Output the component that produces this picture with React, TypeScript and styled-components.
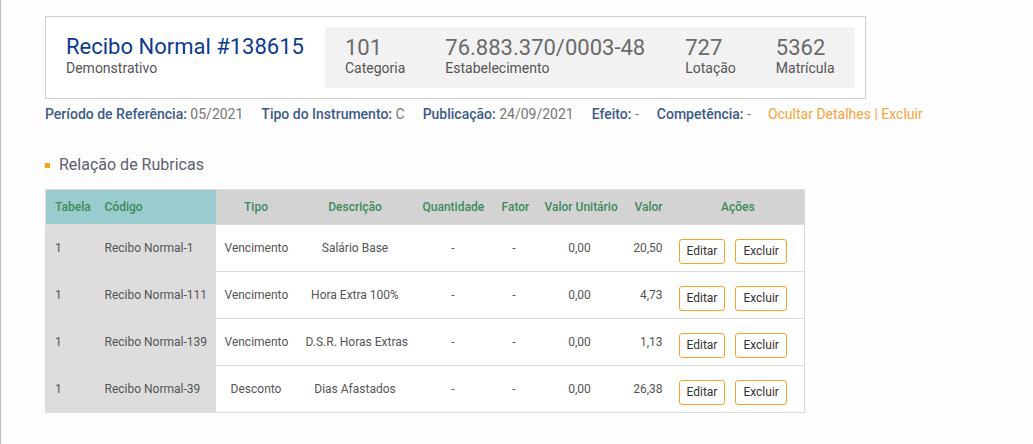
import React from "react";
import styled, { createGlobalStyle } from "styled-components";

const Global = createGlobalStyle`
  html, body { margin: 0; padding: 0; background: #fdfdfd; }
  body { font-family: Roboto, "Liberation Sans", Arial, sans-serif; }
`;

const Page = styled.div`
  min-height: 444px;
  box-sizing: border-box;
  border-left: 1px solid #bdbdbd;
  padding: 16px 0 0 44px;
`;

const Card = styled.div`
  width: 821px;
  box-sizing: border-box;
  border: 1px solid #cfcfcf;
  background: #fff;
  display: flex;
  align-items: flex-start;
  padding: 10px 10px 10px 20px;
  gap: 20px;
`;

const TitleBlock = styled.div`
  display: flex;
  flex-direction: column;
  width: 239px;
  padding-top: 7px;
  white-space: nowrap;
`;

const Title = styled.div`
  font-size: 22px;
  line-height: 26px;
  color: #0b3a8e;
  font-weight: 400;
`;

const Label = styled.div`
  font-size: 14px;
  line-height: 16px;
  color: #555;
  font-weight: 400;
`;

const StatsBox = styled.div`
  flex: 1;
  background: #f2f2f2;
  display: flex;
  gap: 40px;
  padding: 9px 20px 12px 20px;
  white-space: nowrap;
`;

const Stat = styled.div`
  display: flex;
  flex-direction: column;
`;

const StatValue = styled.div`
  font-size: 22px;
  line-height: 24px;
  color: #6a6a6a;
`;

const InfoRow = styled.div`
  display: flex;
  gap: 18px;
  margin-top: 6px;
  font-size: 14px;
  line-height: 18px;
  white-space: nowrap;
`;

const Info = styled.span`
  color: #777;
`;

const InfoLabel = styled.span`
  color: #3e5b88;
  font-weight: 500;
`;

const Links = styled.span`
  color: #f7a43a;
  margin-left: -1px;
`;

const SectionTitle = styled.div`
  display: flex;
  align-items: center;
  gap: 9px;
  margin-top: 32px;
  font-size: 16px;
  color: #606070;
  line-height: 20px;
`;

const Bullet = styled.span`
  width: 5px;
  height: 5px;
  background: #f7a21b;
`;

const Table = styled.table`
  margin-top: 14px;
  border-collapse: collapse;
  table-layout: fixed;
  width: 759px;
  border: 1px solid #dcdcdc;
  font-size: 12px;
`;

const Th = styled.th<{ $accent?: boolean; $align?: string }>`
  background: ${(p) => (p.$accent ? "#99cccc" : "#d3d3d3")};
  color: #3d8a5c;
  font-weight: 500;
  height: 34px;
  padding: 0 9px;
  text-align: ${(p) => p.$align || "center"};
  white-space: nowrap;
`;

const Td = styled.td<{ $shaded?: boolean; $align?: string }>`
  background: ${(p) => (p.$shaded ? "#dddddd" : "#fff")};
  color: #555;
  height: 46px;
  padding: 0 9px;
  text-align: ${(p) => p.$align || "center"};
  border-top: 1px solid ${(p) => (p.$shaded ? "#dddddd" : "#dcdcdc")};
  white-space: nowrap;
  vertical-align: middle;
`;

const ActionsCell = styled.td`
  background: #fff;
  border-top: 1px solid #dcdcdc;
  padding: 6px 8px 0 7px;
  white-space: nowrap;
`;

const Btn = styled.button`
  font-family: inherit;
  font-size: 12px;
  color: #333;
  background: #fff;
  border: 1px solid #f5a623;
  border-radius: 3px;
  height: 25px;
  padding: 0 7px;
  margin-right: 10px;
  cursor: pointer;
`;

const rows = [
  { c: "Recibo Normal-1", t: "Vencimento", d: "Salário Base", v: "20,50" },
  { c: "Recibo Normal-111", t: "Vencimento", d: "Hora Extra 100%", v: "4,73" },
  { c: "Recibo Normal-139", t: "Vencimento", d: "D.S.R. Horas Extras", v: "1,13" },
  { c: "Recibo Normal-39", t: "Desconto", d: "Dias Afastados", v: "26,38" },
];

export default function App() {
  return (
    <Page>
      <Global />
      <Card>
        <TitleBlock>
          <Title>Recibo Normal #138615</Title>
          <Label>Demonstrativo</Label>
        </TitleBlock>
        <StatsBox>
          <Stat>
            <StatValue>101</StatValue>
            <Label>Categoria</Label>
          </Stat>
          <Stat>
            <StatValue>76.883.370/0003-48</StatValue>
            <Label>Estabelecimento</Label>
          </Stat>
          <Stat>
            <StatValue>727</StatValue>
            <Label>Lotação</Label>
          </Stat>
          <Stat>
            <StatValue>5362</StatValue>
            <Label>Matrícula</Label>
          </Stat>
        </StatsBox>
      </Card>
      <InfoRow>
        <Info><InfoLabel>Período de Referência:</InfoLabel> 05/2021</Info>
        <Info><InfoLabel>Tipo do Instrumento:</InfoLabel> C</Info>
        <Info><InfoLabel>Publicação:</InfoLabel> 24/09/2021</Info>
        <Info><InfoLabel>Efeito:</InfoLabel> -</Info>
        <Info><InfoLabel>Competência:</InfoLabel> -</Info>
        <Links>Ocultar Detalhes | Excluir</Links>
      </InfoRow>
      <SectionTitle>
        <Bullet />
        Relação de Rubricas
      </SectionTitle>
      <Table>
        <colgroup>
          <col style={{ width: 50 }} />
          <col style={{ width: 120 }} />
          <col style={{ width: 81 }} />
          <col style={{ width: 117 }} />
          <col style={{ width: 79 }} />
          <col style={{ width: 43 }} />
          <col style={{ width: 88 }} />
          <col style={{ width: 48 }} />
          <col style={{ width: 133 }} />
        </colgroup>
        <thead>
          <tr>
            <Th $accent $align="left">Tabela</Th>
            <Th $accent $align="left">Código</Th>
            <Th>Tipo</Th>
            <Th>Descrição</Th>
            <Th>Quantidade</Th>
            <Th>Fator</Th>
            <Th>Valor Unitário</Th>
            <Th $align="right">Valor</Th>
            <Th>Ações</Th>
          </tr>
        </thead>
        <tbody>
          {rows.map((r) => (
            <tr key={r.c}>
              <Td $shaded $align="left">1</Td>
              <Td $shaded $align="left">{r.c}</Td>
              <Td>{r.t}</Td>
              <Td>{r.d}</Td>
              <Td>-</Td>
              <Td>-</Td>
              <Td>0,00</Td>
              <Td $align="right">{r.v}</Td>
              <ActionsCell>
                <Btn>Editar</Btn>
                <Btn>Excluir</Btn>
              </ActionsCell>
            </tr>
          ))}
        </tbody>
      </Table>
    </Page>
  );
}
